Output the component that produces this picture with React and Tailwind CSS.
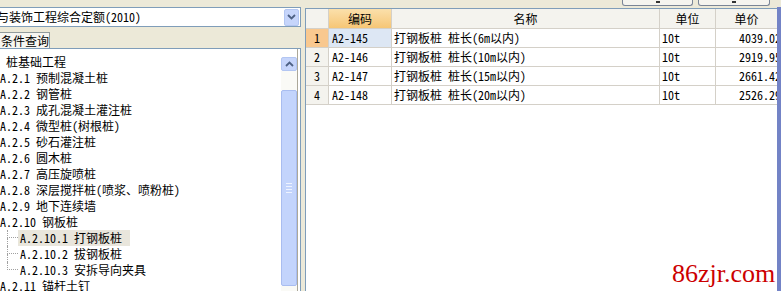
import React from 'react';

const treeItems = [
  { text: '桩基础工程', level: 0 },
  { text: 'A.2.1 预制混凝土桩', level: 1 },
  { text: 'A.2.2 钢管桩', level: 1 },
  { text: 'A.2.3 成孔混凝土灌注桩', level: 1 },
  { text: 'A.2.4 微型桩(树根桩)', level: 1 },
  { text: 'A.2.5 砂石灌注桩', level: 1 },
  { text: 'A.2.6 圆木桩', level: 1 },
  { text: 'A.2.7 高压旋喷桩', level: 1 },
  { text: 'A.2.8 深层搅拌桩(喷浆、喷粉桩)', level: 1 },
  { text: 'A.2.9 地下连续墙', level: 1 },
  { text: 'A.2.10 钢板桩', level: 1 },
  { text: 'A.2.10.1 打钢板桩', level: 2, selected: true },
  { text: 'A.2.10.2 拔钢板桩', level: 2 },
  { text: 'A.2.10.3 安拆导向夹具', level: 2, last: true },
  { text: 'A.2.11 锚杆土钉', level: 1 },
];

const rows = [
  { no: 1, code: 'A2-145', name: '打钢板桩 桩长(6m以内)', unit: '10t', price: '4039.02' },
  { no: 2, code: 'A2-146', name: '打钢板桩 桩长(10m以内)', unit: '10t', price: '2919.95' },
  { no: 3, code: 'A2-147', name: '打钢板桩 桩长(15m以内)', unit: '10t', price: '2661.42' },
  { no: 4, code: 'A2-148', name: '打钢板桩 桩长(20m以内)', unit: '10t', price: '2526.29' },
];

const cols = 'grid grid-cols-[23px_63px_268px_56px_70px]';

const ChevronDown = () => (
  <svg width="9" height="6" viewBox="0 0 9 6">
    <path d="M1 1 L4.5 4.5 L8 1" stroke="#4d6185" strokeWidth="1.8" fill="none" />
  </svg>
);

const ChevronUp = () => (
  <svg width="9" height="6" viewBox="0 0 9 6">
    <path d="M1 5 L4.5 1.5 L8 5" stroke="#4d6185" strokeWidth="1.8" fill="none" />
  </svg>
);

const TreeRow = ({ item }) => {
  if (item.level === 2) {
    return (
      <div className="flex h-[16px] items-center">
        <span className="w-[7px] shrink-0" />
        <span className="flex h-[16px] w-[11px] shrink-0 flex-col">
          <span className="h-[8px] border-b border-l border-dotted border-[#a0a0a0]" />
          <span className={item.last ? 'flex-1' : 'flex-1 border-l border-dotted border-[#a0a0a0]'} />
        </span>
        <span className={item.selected ? 'ml-[0px] bg-[#e9e6dc] pl-[2px] pr-[8px] leading-[16px]' : 'ml-[0px] pl-[2px] leading-[16px]'}>
          {item.text}
        </span>
      </div>
    );
  }
  return (
    <div className={item.level === 0 ? 'h-[16px] pl-[6px] leading-[16px]' : 'h-[16px] leading-[16px]'}>
      {item.text}
    </div>
  );
};

export default function App() {
  return (
    <div
      className="relative h-[291px] w-[781px] overflow-hidden bg-[#ece9d8] text-[12px] text-black"
      style={{ fontFamily: '"Noto Sans Mono CJK SC", "Noto Sans CJK SC", monospace' }}
    >
      {/* top strip with the bottoms of two buttons */}
      <div className="flex h-[7px] items-start">
        <div className="ml-[622px] flex h-[6px] w-[71px] justify-center rounded-b-[3px] border border-t-0 border-[#7a8597] bg-[#f5f4ef]">
          <span className="mt-[1px] h-[2px] w-[4px] bg-[#333]" />
        </div>
        <div className="ml-[5px] flex h-[6px] w-[72px] justify-center rounded-b-[3px] border border-t-0 border-[#7a8597] bg-[#f5f4ef]">
          <span className="mt-[1px] h-[2px] w-[4px] bg-[#333]" />
        </div>
      </div>

      <div className="flex h-[284px]">
        {/* left side */}
        <div className="flex w-[301px] shrink-0 flex-col">
          <div className="flex h-[20px] items-center border border-l-0 border-[#7f9db9] bg-white pr-px">
            <span className="ml-[-3px] flex-1 whitespace-nowrap leading-[18px]">与装饰工程综合定额(2010)</span>
            <span className="flex h-[17px] w-[15px] items-center justify-center rounded-[2px] border border-[#b3c6f2] bg-[#c6d5fb]">
              <ChevronDown />
            </span>
          </div>
          <div className="mt-[5px] flex h-[16px]">
            <div className="h-[16px] w-[50px] border-r border-t border-[#919b9c] bg-[#f7f6f1] pl-[1px] leading-[15px]">条件查询</div>
          </div>
          <div className="flex min-h-0 flex-1 border-r border-t border-[#7f9db9] bg-white">
            <div className="flex-1 overflow-hidden whitespace-nowrap pt-[5px]">
              {treeItems.map((item) => (
                <TreeRow key={item.text} item={item} />
              ))}
            </div>
            <div className="flex w-[16px] shrink-0 flex-col pt-[8px]">
              <span className="flex h-[14px] items-center justify-center rounded-[2px] border border-[#b3c6f2] bg-[#c6d5fb]">
                <ChevronUp />
              </span>
              <span className="h-[19px] bg-[#fafaf6]" />
              <span className="flex h-[196px] flex-col items-center justify-center gap-[2px] rounded-[2px] border border-[#a9bdf0] bg-[#c3d4fc]">
                <span className="h-px w-[6px] bg-[#eef3ff]" />
                <span className="h-px w-[6px] bg-[#eef3ff]" />
                <span className="h-px w-[6px] bg-[#eef3ff]" />
                <span className="h-px w-[6px] bg-[#eef3ff]" />
              </span>
              <span className="flex-1 bg-[#fafaf6]" />
            </div>
            <div className="w-[3px] shrink-0 border-l border-[#aca899] bg-white" />
          </div>
        </div>

        {/* right grid */}
        <div className="ml-[4px] mt-[1px] w-[472px] shrink-0 overflow-hidden border-l border-t border-[#7f9db9] bg-white">
          <div className="w-[481px]">
            <div className={`${cols} h-[20px] border-b border-[#d4d0c8] bg-[#f4f3ee] leading-[19px]`}>
              <div className="border-r border-[#d4d0c8]" />
              <div className="border-r border-[#d4d0c8] bg-gradient-to-b from-[#fbe0ab] to-[#f6c675] text-center">编码</div>
              <div className="border-r border-[#d4d0c8] text-center">名称</div>
              <div className="border-r border-[#d4d0c8] text-center">单位</div>
              <div className="pr-[9px] text-center">单价</div>
            </div>
            {rows.map((r) => (
              <div key={r.no} className={`${cols} h-[19px] border-b border-[#d4d0c8] leading-[18px]`}>
                <div className={r.no === 1 ? 'border-r border-[#d4d0c8] bg-[#f9c88f] text-center' : 'border-r border-[#d4d0c8] bg-[#f4f3ee] text-center'}>
                  {r.no}
                </div>
                <div className={r.no === 1 ? 'border-r border-[#d4d0c8] bg-[#dde7f4] pl-[3px]' : 'border-r border-[#d4d0c8] pl-[3px]'}>
                  {r.code}
                </div>
                <div className="whitespace-nowrap border-r border-[#d4d0c8] pl-[2px]">{r.name}</div>
                <div className="border-r border-[#d4d0c8] pl-[2px]">{r.unit}</div>
                <div className="pr-[5px] text-right">{r.price}</div>
              </div>
            ))}
          </div>
        </div>

        <div className="w-[4px] shrink-0 bg-[#7383c6]" />
      </div>

      {/* watermark */}
      <div
        className="absolute left-[672px] top-[259px] text-[26px] leading-[30px] text-[#cc0000]"
        style={{ fontFamily: '"Liberation Serif", serif' }}
      >
        86zjr.com
      </div>
    </div>
  );
}
